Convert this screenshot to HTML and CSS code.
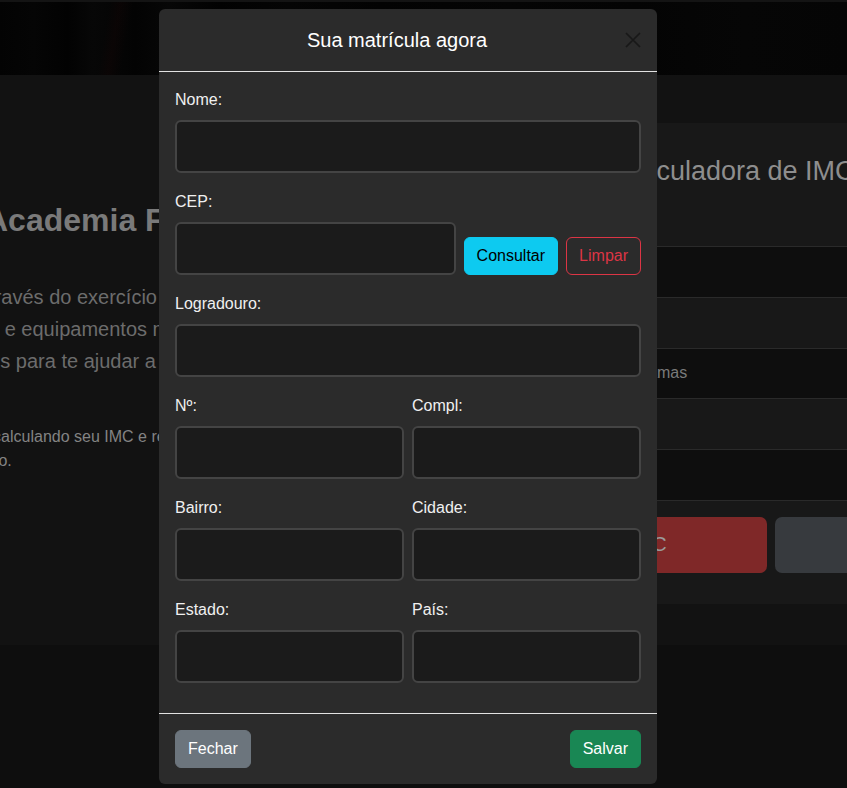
FILE: index.html
```html
<!DOCTYPE html>
<html lang="pt-BR">
<head>
<meta charset="utf-8">
<title>Academia Fit</title>
<link rel="stylesheet" href="styles.css">
</head>
<body>
  <div class="top-strip"></div>
  <header class="hero"></header>
  <main class="main">
    <section class="intro">
      <h1 class="intro-title">Academia Fit Vida</h1>
      <p class="lead">através do exercício físico, com<br>os e equipamentos modernos e<br>nos para te ajudar a alcançar</p>
      <p class="note">E calculando seu IMC e recebendo dicas<br>jeito.</p>
    </section>
    <section class="imc-card">
      <h2 class="imc-title">Calculadora de IMC</h2>
      <div class="imc-table">
        <div class="imc-row dark"></div>
        <div class="imc-row"></div>
        <div class="imc-row dark"><span class="imc-text">Veja nossos planos e programas</span></div>
        <div class="imc-row"></div>
        <div class="imc-row dark"></div>
      </div>
      <div class="imc-actions">
        <button class="imc-btn red">Calcular IMC</button>
        <button class="imc-btn gray">Limpar</button>
      </div>
    </section>
  </main>
  <div class="lower"></div>

  <div class="modal">
    <div class="modal-header">
      <h5 class="modal-title">Sua matrícula agora</h5>
      <button class="close" aria-label="Fechar">
        <svg width="16" height="16" viewBox="0 0 16 16"><path d="M1 1 L15 15 M15 1 L1 15" stroke="#181818" stroke-width="1.7" fill="none"/></svg>
      </button>
    </div>
    <div class="modal-body">
      <div class="field">
        <label>Nome:</label>
        <input class="input" type="text">
      </div>
      <div class="field">
        <label>CEP:</label>
        <div class="cep-row">
          <input class="input" type="text">
          <button class="btn btn-info">Consultar</button>
          <button class="btn btn-outline-danger">Limpar</button>
        </div>
      </div>
      <div class="field">
        <label>Logradouro:</label>
        <input class="input" type="text">
      </div>
      <div class="pair">
        <div class="field">
          <label>Nº:</label>
          <input class="input" type="text">
        </div>
        <div class="field">
          <label>Compl:</label>
          <input class="input" type="text">
        </div>
      </div>
      <div class="pair">
        <div class="field">
          <label>Bairro:</label>
          <input class="input" type="text">
        </div>
        <div class="field">
          <label>Cidade:</label>
          <input class="input" type="text">
        </div>
      </div>
      <div class="pair">
        <div class="field">
          <label>Estado:</label>
          <input class="input" type="text">
        </div>
        <div class="field">
          <label>País:</label>
          <input class="input" type="text">
        </div>
      </div>
    </div>
    <div class="modal-footer">
      <button class="btn btn-secondary">Fechar</button>
      <button class="btn btn-success">Salvar</button>
    </div>
  </div>
</body>
</html>
```
FILE: styles.css
```css
* { box-sizing: border-box; }
html, body { margin: 0; height: 100%; }
body {
  position: relative;
  overflow: hidden;
  background: #0e0e0e;
  font-family: "Liberation Sans", Arial, sans-serif;
}

.top-strip { height: 2px; background: #141414; }
.hero {
  height: 73px;
  background:
    linear-gradient(100deg, transparent 0, transparent 12.8%, rgba(30,6,6,0.22) 14%, transparent 15.5%, transparent 100%),
    linear-gradient(90deg, #030303 0%, #050505 4%, #020202 8%, #070707 11%, #030303 16%, #070707 20%, #020202 26%, #050505 34%, #030303 45%, #050505 60%, #040404 75%, #060606 88%, #050505 100%);
}

.main {
  display: flex;
  width: 1200px;
  height: 570px;
  margin-left: -22px;
  padding-top: 48px;
  background: #121212;
}
.lower { height: 200px; background: #0e0e0e; }

.intro { width: 449px; flex: none; padding-top: 78px; white-space: nowrap; }
.intro-title {
  margin: 0 0 42px;
  padding-left: 7px;
  font-size: 32px;
  line-height: 38px;
  font-weight: 700;
  color: #7a7a7a;
}
.lead {
  margin: 0 0 48px;
  font-size: 20px;
  line-height: 32px;
  color: #6c6c6c;
}
.note {
  margin: 0;
  font-size: 16px;
  line-height: 24px;
  color: #838383;
}

.imc-card {
  width: 688px;
  height: 481px;
  flex: none;
  padding: 33px 24px 0;
  background: #181818;
}
.imc-title {
  margin: 0 0 59px;
  padding-left: 165px;
  font-size: 27px;
  line-height: 31px;
  font-weight: 400;
  color: #8e8e8e;
  white-space: nowrap;
}
.imc-table { border-bottom: 1px solid #2a2a2a; }
.imc-row {
  height: 50.8px;
  border-top: 1px solid #2a2a2a;
  display: flex;
  align-items: center;
  padding: 0 4px;
}
.imc-row.dark { background: #0e0e0e; }
.imc-text { font-size: 16px; color: #7a7a7a; white-space: nowrap; }

.imc-actions {
  display: grid;
  grid-template-columns: 316px 316px;
  gap: 8px;
  margin-top: 16px;
}
.imc-btn {
  height: 56px;
  border: 0;
  border-radius: 7px;
  font-family: inherit;
  font-size: 20px;
  color: #9a9a9a;
}
.imc-btn.red { background: #7f2828; }
.imc-btn.gray { background: #373a3e; color: #373a3e; }

/* Modal */
.modal {
  position: absolute;
  top: 9px;
  left: 159px;
  width: 498px;
  background: #2b2b2b;
  border-radius: 6px;
  color: #f0f0f0;
}
.modal-header {
  display: flex;
  align-items: center;
  padding: 16px;
  border-bottom: 1px solid #e2e2e2;
}
.modal-title {
  flex: 1;
  margin: 0;
  text-align: center;
  font-size: 20px;
  line-height: 30px;
  font-weight: 400;
  color: #ffffff;
}
.close {
  width: 16px;
  height: 16px;
  margin-left: 6px;
  padding: 0;
  border: 0;
  background: none;
  display: flex;
}
.modal-body { padding: 16px 16px 13px; }
.field { margin-bottom: 17px; min-width: 0; }
.field label {
  display: block;
  margin-bottom: 8px;
  font-size: 16px;
  line-height: 24px;
  color: #f0f0f0;
}
.input {
  display: block;
  width: 100%;
  height: 53px;
  background: #1b1b1b;
  border: 2px solid #444444;
  border-radius: 6px;
  color: #fff;
  font-family: inherit;
  font-size: 16px;
  padding: 6px 12px;
}
.cep-row { display: flex; align-items: flex-end; gap: 8px; }
.cep-row .input { flex: 1; min-width: 0; }
.pair { display: grid; grid-template-columns: 1fr 1fr; gap: 8px; }

.btn {
  flex: none;
  font-family: inherit;
  font-size: 16px;
  line-height: 24px;
  padding: 6px 12px;
  border: 1px solid transparent;
  border-radius: 6px;
}
.btn-info { background: #0dcaf0; border-color: #0dcaf0; color: #000; }
.btn-outline-danger { background: transparent; border-color: #dc3545; color: #dc3545; }
.btn-secondary { background: #6c757d; border-color: #6c757d; color: #fff; }
.btn-success { background: #198754; border-color: #198754; color: #fff; }

.modal-footer {
  display: flex;
  justify-content: space-between;
  padding: 16px;
  border-top: 1px solid #e2e2e2;
}
```
